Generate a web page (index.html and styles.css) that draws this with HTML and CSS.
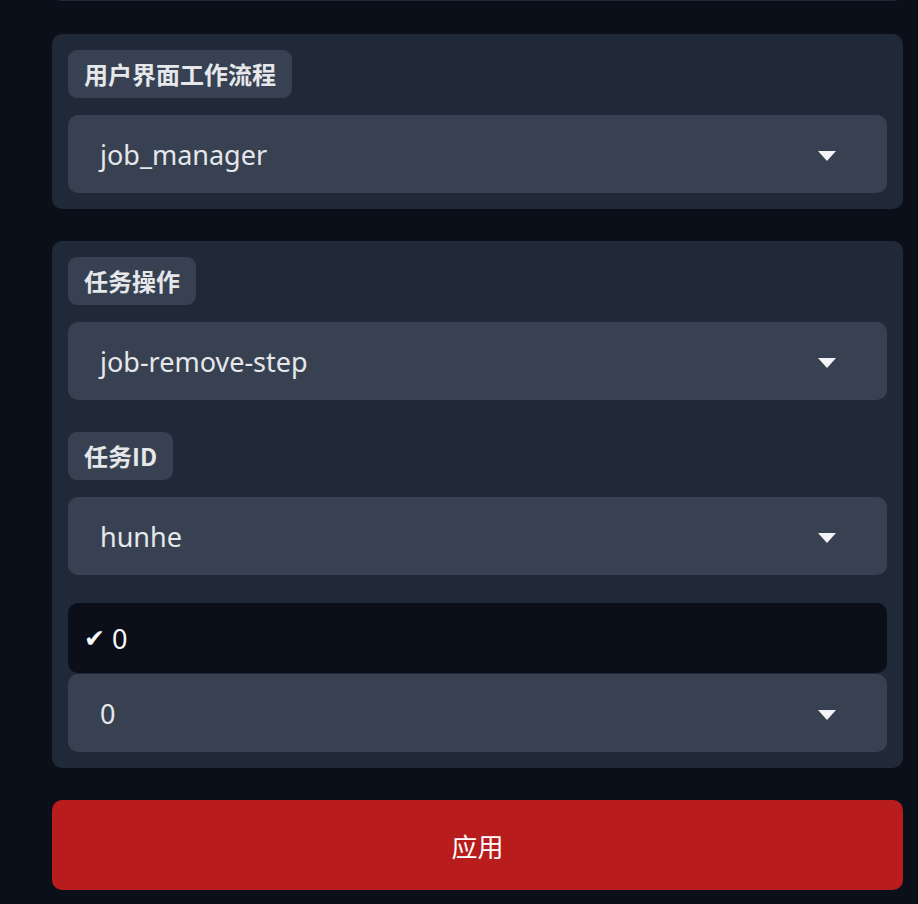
FILE: index.html
```html
<!DOCTYPE html>
<html lang="zh">
<head>
  <meta charset="UTF-8" />
  <meta name="viewport" content="width=device-width, initial-scale=1.0"/>
  <title>工作流程</title>
  <link rel="stylesheet" href="styles.css">
</head>
<body>

<main class="page">
  <div class="card card-cut"></div>

  <!-- 工作流程选择 -->
  <section class="card">
    <div class="field">
      <span class="label">用户界面工作流程</span>
      <div class="select">
        <span>job_manager</span>
        <span class="caret"></span>
      </div>
    </div>
  </section>

  <!-- 任务设置 -->
  <section class="card">
    <div class="field">
      <span class="label">任务操作</span>
      <div class="select">
        <span>job-remove-step</span>
        <span class="caret"></span>
      </div>
    </div>

    <div class="field">
      <span class="label">任务ID</span>
      <div class="select">
        <span>hunhe</span>
        <span class="caret"></span>
      </div>
    </div>

    <div class="steps">
      <div class="option"><span class="check">✔</span> 0</div>
      <div class="select">
        <span>0</span>
        <span class="caret"></span>
      </div>
    </div>
  </section>

  <button class="apply">应用</button>
</main>

</body>
</html>
```

FILE: styles.css
```css
body {
  margin: 0;
  background-color: #0b0f19;
  color: #e5e7eb;
  font-family: "Noto Sans", "Noto Sans CJK SC", sans-serif;
}

.page {
  width: 851px;
  padding-left: 52px;
  display: flex;
  flex-direction: column;
  gap: 32px;
}

.card {
  background-color: #1f2937;
  border-radius: 10px;
  padding: 16px;
  display: flex;
  flex-direction: column;
  gap: 32px;
}

.card-cut {
  height: 40px;
  padding: 0;
  margin-top: -39px;
  margin-bottom: 1px;
}

.field {
  display: flex;
  flex-direction: column;
  align-items: flex-start;
  gap: 17px;
}

.label {
  background-color: #374151;
  border-radius: 9px;
  padding: 8px 16px;
  line-height: 32px;
  font-size: 24px;
  font-weight: bold;
  color: #e5e7eb;
  font-family: "Noto Sans CJK SC", sans-serif;
}

.select {
  align-self: stretch;
  height: 78px;
  box-sizing: border-box;
  background-color: #374151;
  border-radius: 10px;
  padding: 0 51px 0 32px;
  display: flex;
  align-items: center;
  justify-content: space-between;
  font-size: 27px;
  color: #e5e7eb;
}

.caret {
  width: 0;
  height: 0;
  border-left: 9px solid transparent;
  border-right: 9px solid transparent;
  border-top: 10px solid #f3f4f6;
  margin-top: 3px;
}

.steps {
  margin-top: -4px;
  display: flex;
  flex-direction: column;
  gap: 1px;
}

.option {
  height: 70px;
  background-color: #0b0f19;
  border-radius: 10px;
  padding-left: 16px;
  display: flex;
  align-items: center;
  gap: 7px;
  font-size: 27px;
  color: #f9fafb;
}

.check {
  font-family: "DejaVu Sans", sans-serif;
  font-size: 25px;
}

.apply {
  height: 90px;
  border: none;
  border-radius: 10px;
  background-color: #b91c1c;
  color: #ffffff;
  font-size: 26px;
  font-weight: 400;
  font-family: "Noto Sans CJK SC", sans-serif;
  cursor: pointer;
}
```
